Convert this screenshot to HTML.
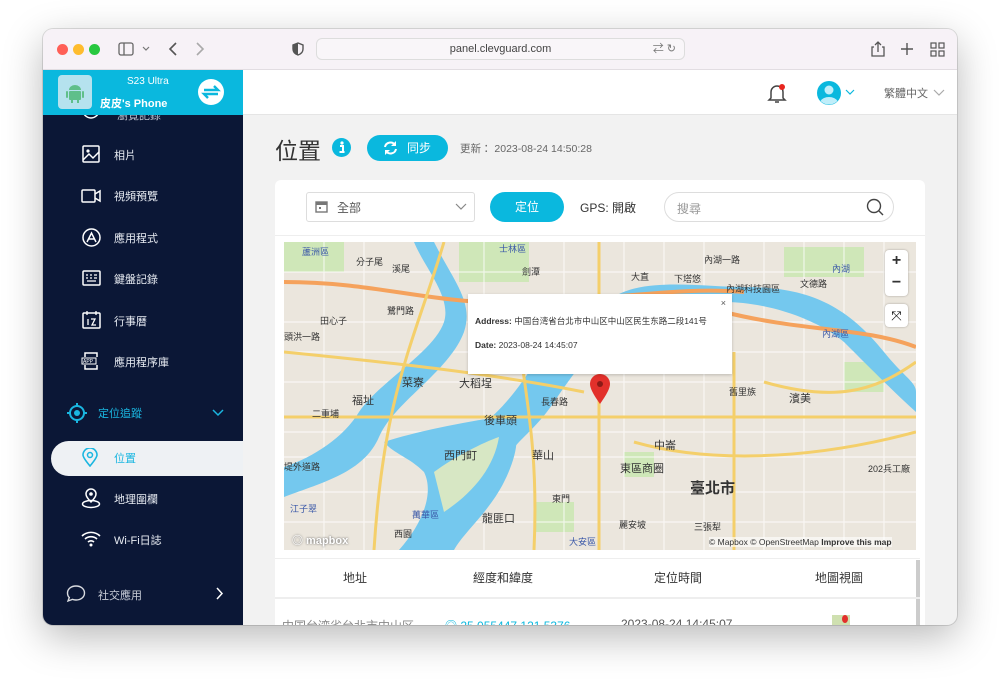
<!DOCTYPE html>
<html><head><meta charset="utf-8"><style>
*{margin:0;padding:0;box-sizing:border-box}
body{width:1000px;height:682px;background:#fff;font-family:"Liberation Sans","Noto Sans CJK TC",sans-serif;position:relative;overflow:hidden}
.win{position:absolute;left:43px;top:29px;width:914px;height:596px;border-radius:10px;overflow:hidden;box-shadow:0 12px 40px rgba(0,0,0,.28),0 0 0 1px rgba(0,0,0,.12);background:#f2f2f2}
.tb{position:absolute;left:0;top:0;width:914px;height:41px;background:#f7f2f7;border-bottom:1px solid #e2dde2}
.dot{position:absolute;top:15px;width:11px;height:11px;border-radius:50%}
.url{position:absolute;left:273px;top:9px;width:369px;height:22px;border:1px solid #ddd;border-radius:6px;background:#f9f6f9;text-align:center;font-size:11px;color:#444;line-height:21px}
.side{position:absolute;left:0;top:41px;width:200px;height:555px;background:#0b1736;color:#fff}
.shead{position:absolute;left:0;top:0;width:200px;height:45px;background:#0ab8de}
.item{position:absolute;left:38px;font-size:11px;color:#e8ecf3}
.main{position:absolute;left:200px;top:41px;width:714px;height:555px}
.topbar{position:absolute;left:0;top:0;width:714px;height:45px;background:#fff;border-bottom:1px solid #e5e5e5}
.card{position:absolute;left:32px;top:110px;width:650px;height:460px;background:#fff;border-radius:6px}
.map{position:absolute;left:9px;top:62px;width:632px;height:308px;background:#ebe6dd;overflow:hidden}
.lb{position:absolute;font-size:9px;color:#333;white-space:nowrap}
</style></head><body>
<div class="win">
 <div class="tb">
  <div class="dot" style="left:14px;background:#ff5f57"></div>
  <div class="dot" style="left:30px;background:#febc2e"></div>
  <div class="dot" style="left:46px;background:#28c840"></div>
  <svg style="position:absolute;left:75px;top:13px" width="32" height="14"><rect x="1" y="1" width="14" height="12" rx="2" fill="none" stroke="#666" stroke-width="1.3"/><line x1="6" y1="1" x2="6" y2="13" stroke="#666" stroke-width="1.3"/><path d="M25 5l3 3 3-3" fill="none" stroke="#777" stroke-width="1.2"/></svg>
  <svg style="position:absolute;left:124px;top:12px" width="40" height="16"><path d="M9 2l-6 6 6 6" fill="none" stroke="#555" stroke-width="1.6"/><path d="M30 2l6 6-6 6" fill="none" stroke="#aaa" stroke-width="1.6"/></svg>
  <svg style="position:absolute;left:249px;top:13px" width="12" height="14"><path d="M6 1L1 3v4c0 3 2 5 5 6 3-1 5-3 5-6V3z" fill="none" stroke="#555" stroke-width="1.4"/><path d="M6 1v12c-3-1-5-3-5-6V3z" fill="#555"/></svg>
  <div class="url">panel.clevguard.com<span style="position:absolute;right:8px;color:#777;font-size:11px">⇄ ↻</span></div>
  <svg style="position:absolute;left:828px;top:11px" width="80" height="18"><path d="M3 7h-2v9h12V7h-2M7 2v10M4 5l3-3 3 3" fill="none" stroke="#555" stroke-width="1.3"/><path d="M36 3v12M30 9h12" stroke="#555" stroke-width="1.4"/><g fill="none" stroke="#555" stroke-width="1.2"><rect x="60" y="3" width="5" height="5"/><rect x="68" y="3" width="5" height="5"/><rect x="60" y="11" width="5" height="5"/><rect x="68" y="11" width="5" height="5"/></g></svg>
 </div>
 <div class="side">
  <div style="position:absolute;left:0;top:45px;width:200px;height:20px;overflow:hidden">
   <div class="item" style="left:74px;top:-8px;opacity:.8">瀏覽記錄</div>
   <svg style="position:absolute;left:38px;top:-10px" width="20" height="20"><circle cx="10" cy="5" r="8" fill="none" stroke="#fff" stroke-width="1.5"/></svg>
  </div>
  <div class="shead">
   <div style="position:absolute;left:15px;top:5px;width:34px;height:34px;background:#b5e2ee;border-radius:4px"><svg width="34" height="34"><g fill="#5fbf8a"><path d="M11 15a6 5 0 0 1 12 0z"/><rect x="11" y="16" width="12" height="9" rx="1"/><rect x="8" y="16" width="2" height="7" rx="1"/><rect x="24" y="16" width="2" height="7" rx="1"/><rect x="13" y="24" width="2" height="4"/><rect x="19" y="24" width="2" height="4"/></g></svg></div>
   <div style="position:absolute;left:84px;top:6px;font-size:10px">S23 Ultra</div>
   <div style="position:absolute;left:57px;top:25px;font-size:11px;font-weight:bold">皮皮's Phone</div>
   <svg style="position:absolute;left:155px;top:9px" width="26" height="26"><circle cx="13" cy="13" r="13" fill="#fff"/><path d="M6 11h14l-4-4M20 15H6l4 4" fill="none" stroke="#0ab8de" stroke-width="2.4"/></svg>
  </div>
  <svg style="position:absolute;left:39px;top:75px" width="18" height="18"><rect x="1" y="1" width="16" height="16" rx="1" fill="none" stroke="#fff" stroke-width="1.5"/><circle cx="6" cy="6" r="1.6" fill="#fff"/><path d="M1 15l6-6 4 4 6-6" fill="none" stroke="#fff" stroke-width="1.5"/></svg>
  <div class="item" style="left:71px;top:77px">相片</div>
  <svg style="position:absolute;left:38px;top:118px" width="20" height="16"><rect x="1" y="2" width="13" height="12" rx="1" fill="none" stroke="#fff" stroke-width="1.5"/><path d="M14 6l5-3v10l-5-3" fill="none" stroke="#fff" stroke-width="1.5"/></svg>
  <div class="item" style="left:71px;top:118px">視頻預覽</div>
  <svg style="position:absolute;left:39px;top:158px" width="19" height="19"><circle cx="9.5" cy="9.5" r="8.5" fill="none" stroke="#fff" stroke-width="1.5"/><path d="M5 14l4.5-9 4.5 9M6.5 11h6" fill="none" stroke="#fff" stroke-width="1.5"/></svg>
  <div class="item" style="left:71px;top:160px">應用程式</div>
  <svg style="position:absolute;left:39px;top:200px" width="19" height="16"><rect x="1" y="1" width="17" height="14" rx="1" fill="none" stroke="#fff" stroke-width="1.5"/><path d="M4 5h2M8 5h2M12 5h3M4 8h2M8 8h2M12 8h3M5 11h9" stroke="#fff" stroke-width="1.3"/></svg>
  <div class="item" style="left:71px;top:201px">鍵盤記錄</div>
  <svg style="position:absolute;left:39px;top:240px" width="19" height="19"><rect x="1" y="3" width="17" height="15" rx="1" fill="none" stroke="#fff" stroke-width="1.5"/><path d="M5 1v4M14 1v4M6 9v6M9 9h4l-3 6h4" fill="none" stroke="#fff" stroke-width="1.3"/></svg>
  <div class="item" style="left:71px;top:243px">行事曆</div>
  <svg style="position:absolute;left:38px;top:281px" width="20" height="20"><path d="M4 6V2h12v4M4 14v4h12v-4" fill="none" stroke="#fff" stroke-width="1.5"/><rect x="1" y="7" width="14" height="6" fill="#0b1736" stroke="#fff"/><text x="2" y="12" font-size="5" fill="#fff" font-family="Liberation Sans">APP</text></svg>
  <div class="item" style="left:71px;top:284px">應用程序庫</div>
  <svg style="position:absolute;left:24px;top:333px" width="20" height="20"><circle cx="10" cy="10" r="7" fill="none" stroke="#1ab6e0" stroke-width="2"/><circle cx="10" cy="10" r="3" fill="#1ab6e0"/><path d="M10 0v3M10 17v3M0 10h3M17 10h3" stroke="#1ab6e0" stroke-width="2"/></svg>
  <div class="item" style="left:55px;top:335px;color:#1ab6e0">定位追蹤</div>
  <svg style="position:absolute;left:169px;top:339px" width="12" height="8"><path d="M1 1l5 5 5-5" fill="none" stroke="#1ab6e0" stroke-width="1.5"/></svg>
  <div style="position:absolute;left:8px;top:371px;width:192px;height:35px;background:#eef1f4;border-radius:18px 0 0 18px"></div>
  <svg style="position:absolute;left:39px;top:378px" width="16" height="19"><path d="M8 18C3 12 1 9 1 7a7 7 0 0 1 14 0c0 2-2 5-7 11z" fill="none" stroke="#1ab6e0" stroke-width="1.6"/><circle cx="8" cy="7" r="2.5" fill="none" stroke="#1ab6e0" stroke-width="1.5"/></svg>
  <div class="item" style="left:71px;top:380px;color:#1ab6e0">位置</div>
  <svg style="position:absolute;left:38px;top:418px" width="20" height="21"><path d="M10 14C6 10 5 8 5 6a5 5 0 0 1 10 0c0 2-1 4-5 8z" fill="none" stroke="#fff" stroke-width="1.5"/><circle cx="10" cy="6" r="1.8" fill="#fff"/><ellipse cx="10" cy="16" rx="8.5" ry="3.5" fill="none" stroke="#fff" stroke-width="1.5"/></svg>
  <div class="item" style="left:71px;top:421px">地理圍欄</div>
  <svg style="position:absolute;left:38px;top:460px" width="20" height="17"><path d="M1 6a13 13 0 0 1 18 0M4 9a9 9 0 0 1 12 0M7 12a4.5 4.5 0 0 1 6 0" fill="none" stroke="#fff" stroke-width="1.6"/><circle cx="10" cy="15" r="1.5" fill="#fff"/></svg>
  <div class="item" style="left:71px;top:462px">Wi-Fi日誌</div>
  <svg style="position:absolute;left:23px;top:514px" width="20" height="19"><path d="M10 2c5 0 8.5 3 8.5 7s-3.5 7-8.5 7c-1.3 0-2.5-.2-3.5-.6L2 17l1.3-3.5C2 12.3 1.5 10.7 1.5 9c0-4 3.5-7 8.5-7z" fill="none" stroke="#fff" stroke-width="1.4" opacity=".85"/></svg>
  <div class="item" style="left:55px;top:517px;opacity:.85">社交應用</div>
  <svg style="position:absolute;left:173px;top:517px" width="8" height="13"><path d="M1 1l5 5.5-5 5.5" fill="none" stroke="#fff" stroke-width="1.5"/></svg>
 </div>
 <div class="main">
  <div class="topbar">
   <svg style="position:absolute;left:524px;top:13px" width="20" height="21"><path d="M4 15V9a6 6 0 0 1 12 0v6l2 2H2z" fill="none" stroke="#444" stroke-width="1.5"/><path d="M8 19h4" stroke="#444" stroke-width="1.5"/><circle cx="15" cy="4" r="3" fill="#e8251f"/></svg>
   <svg style="position:absolute;left:574px;top:11px" width="40" height="24"><circle cx="12" cy="12" r="12" fill="#0ab8de"/><circle cx="12" cy="9" r="4.5" fill="#bfeefa"/><path d="M3.5 20a9 6 0 0 1 17 0 12 12 0 0 1-17 0z" fill="#bfeefa"/><path d="M29 9l4 4 4-4" fill="none" stroke="#0ab8de" stroke-width="1.2"/></svg>
   <div style="position:absolute;left:641px;top:15px;font-size:11px;color:#666">繁體中文</div>
   <svg style="position:absolute;left:690px;top:19px" width="12" height="8"><path d="M1 1l5 5 5-5" fill="none" stroke="#aaa" stroke-width="1.2"/></svg>
  </div>
  <div style="position:absolute;left:32px;top:62px;font-size:23px;color:#333">位置</div>
  <svg style="position:absolute;left:89px;top:68px" width="19" height="19"><circle cx="9.5" cy="9.5" r="9.5" fill="#0ab8de"/><circle cx="10" cy="5" r="1.6" fill="#fff"/><path d="M8 8h3v6h1.5M7.5 14h5" stroke="#fff" stroke-width="2" fill="none"/></svg>
  <div style="position:absolute;left:124px;top:65px;width:81px;height:26px;border-radius:13px;background:#0ab8de;color:#fff;font-size:12px;line-height:26px;padding-left:40px">同步</div>
  <svg style="position:absolute;left:139px;top:70px" width="17" height="16"><path d="M3 7a5.5 5.5 0 0 1 10-2M14 9a5.5 5.5 0 0 1-10 2" fill="none" stroke="#fff" stroke-width="2"/><path d="M14 1v5h-5M3 15v-5h5" fill="#fff"/></svg>
  <div style="position:absolute;left:217px;top:71px;font-size:10.5px;color:#666">更新： 2023-08-24 14:50:28</div>
  <div class="card">
   <div style="position:absolute;left:31px;top:12px;width:169px;height:30px;border:1px solid #ddd;border-radius:3px"></div>
   <svg style="position:absolute;left:40px;top:20px" width="13" height="13"><rect x="1" y="2" width="11" height="10" fill="none" stroke="#777" stroke-width="1.4"/><rect x="1" y="2" width="11" height="3" fill="#777"/><rect x="4" y="7" width="2" height="2" fill="#777"/></svg>
   <div style="position:absolute;left:62px;top:19px;font-size:12px;color:#555">全部</div>
   <svg style="position:absolute;left:180px;top:23px" width="12" height="8"><path d="M1 1l5 5 5-5" fill="none" stroke="#888" stroke-width="1.2"/></svg>
   <div style="position:absolute;left:215px;top:12px;width:74px;height:30px;border-radius:15px;background:#0ab8de;color:#fff;font-size:12px;text-align:center;line-height:30px">定位</div>
   <div style="position:absolute;left:305px;top:19px;font-size:12px;color:#333">GPS: 開啟</div>
   <div style="position:absolute;left:389px;top:12px;width:230px;height:30px;border:1px solid #ddd;border-radius:15px"></div>
   <div style="position:absolute;left:402px;top:20px;font-size:12px;color:#999">搜尋</div>
   <svg style="position:absolute;left:591px;top:18px" width="18" height="18"><circle cx="8" cy="8" r="6.5" fill="none" stroke="#444" stroke-width="1.4"/><path d="M13 13l4 4" stroke="#444" stroke-width="1.4"/></svg>
   <div style="position:absolute;left:0;top:55px;width:650px;height:1px;background:#eee"></div>
   <div class="map">
    <svg width="632" height="308" style="position:absolute;left:0;top:0">
     <g fill="#cfe7b8"><rect x="0" y="0" width="60" height="30"/><rect x="175" y="0" width="70" height="40"/><rect x="500" y="5" width="80" height="30"/><rect x="340" y="210" width="30" height="25"/><rect x="250" y="260" width="40" height="30"/><rect x="560" y="120" width="40" height="30"/></g>
     <g stroke="#fff" stroke-width="1.2" opacity=".7"><path d="M0 80H632M0 140H632M0 215H632M0 250H632M0 280H632M40 0V308M280 0V308M380 0V308M420 0V308M520 0V308M560 0V308M600 0V308M340 0V308M0 30H632M0 110H632M0 190H632M80 0V308M200 0V308M480 0V308"/></g>
     <path d="M150 0C170 40 190 60 180 90 165 130 110 160 95 195 80 230 40 240 0 255V225C30 215 60 195 75 170 95 140 150 110 160 80 168 55 140 25 130 0z" fill="#74c8ee"/>
     <path d="M195 185C230 160 250 120 265 100 275 90 300 80 330 55 360 35 420 45 460 45 520 45 560 60 600 110 620 135 632 140 632 150V170C610 150 590 130 560 100 530 75 480 60 440 60 400 58 360 55 335 80 310 105 290 130 270 160 250 190 230 200 225 215z" fill="#74c8ee"/>
     <path d="M100 200C130 190 180 180 215 175 240 180 235 210 220 240 205 270 180 290 170 308H115C140 280 150 250 140 230 125 215 110 212 100 200z" fill="#74c8ee"/>
     <path d="M150 230C170 215 200 200 215 195 210 225 190 250 160 270z" fill="#d7e7c4"/>
     <g fill="none" stroke="#f5a25c" stroke-width="4"><path d="M0 40C100 40 150 65 250 60S400 45 460 50"/><path d="M440 70C520 90 580 85 632 105"/></g>
     <g fill="none" stroke="#f4cf6a" stroke-width="3"><path d="M315 0V308M0 175H632M160 0C130 100 100 150 90 308M230 60C240 150 255 200 250 308M450 110V308M350 200C420 220 520 220 632 190M0 110C100 120 200 130 300 150M480 140C550 160 590 150 632 120"/></g>
     <path d="M316 170C309 160 306 154 306 150a10 10 0 0 1 20 0c0 4-3 10-10 20z" transform="translate(0,-8)" fill="#e2302b"/>
     <circle cx="316" cy="142" r="3" fill="#8b1a16"/>
    </svg>
    <div class="lb" style="left:18px;top:3px;color:#3a58a8">蘆洲區</div><div class="lb" style="left:72px;top:13px">分子尾</div><div class="lb" style="left:108px;top:20px">溪尾</div><div class="lb" style="left:215px;top:0;color:#3a58a8">士林區</div><div class="lb" style="left:238px;top:23px">劍潭</div><div class="lb" style="left:347px;top:28px">大直</div><div class="lb" style="left:390px;top:30px">下塔悠</div><div class="lb" style="left:420px;top:11px">內湖一路</div><div class="lb" style="left:442px;top:40px">內湖科技園區</div><div class="lb" style="left:516px;top:35px">文德路</div><div class="lb" style="left:548px;top:20px;color:#3a58a8">內湖</div><div class="lb" style="left:36px;top:72px">田心子</div><div class="lb" style="left:0;top:88px;">頭洪一路</div><div class="lb" style="left:103px;top:62px">鷺門路</div><div class="lb" style="left:118px;top:132px;font-size:11px">菜寮</div><div class="lb" style="left:175px;top:133px;font-size:11px">大稻埕</div><div class="lb" style="left:68px;top:150px;font-size:11px">福址</div><div class="lb" style="left:28px;top:165px">二重埔</div><div class="lb" style="left:200px;top:170px;font-size:11px">後車頭</div><div class="lb" style="left:257px;top:153px">長春路</div><div class="lb" style="left:370px;top:195px;font-size:11px">中崙</div><div class="lb" style="left:445px;top:143px">舊里族</div><div class="lb" style="left:505px;top:148px;font-size:11px">濱美</div><div class="lb" style="left:538px;top:85px;color:#3a58a8">內湖區</div><div class="lb" style="left:160px;top:205px;font-size:11px">西門町</div><div class="lb" style="left:248px;top:205px;font-size:11px">華山</div><div class="lb" style="left:336px;top:218px;font-size:11px">東區商圈</div><div class="lb" style="left:406px;top:235px;font-size:15px;font-weight:bold">臺北市</div><div class="lb" style="left:0;top:218px">堤外道路</div><div class="lb" style="left:6px;top:260px;color:#3a58a8">江子翠</div><div class="lb" style="left:128px;top:266px;color:#3a58a8">萬華區</div><div class="lb" style="left:198px;top:268px;font-size:11px">龍匪口</div><div class="lb" style="left:110px;top:285px">西園</div><div class="lb" style="left:268px;top:250px">東門</div><div class="lb" style="left:335px;top:276px">麗安坡</div><div class="lb" style="left:410px;top:278px">三張犁</div><div class="lb" style="left:285px;top:293px;color:#3a58a8">大安區</div><div class="lb" style="left:584px;top:220px">202兵工廠</div>
    <div style="position:absolute;left:184px;top:52px;width:264px;height:80px;background:#fff;box-shadow:0 1px 3px rgba(0,0,0,.2);font-size:8.5px;color:#333">
     <div style="position:absolute;right:6px;top:4px;font-size:9px;color:#555">×</div>
     <div style="position:absolute;left:7px;top:21px"><b>Address:</b> 中国台湾省台北市中山区中山区民生东路二段141号</div>
     <div style="position:absolute;left:7px;top:46px"><b>Date:</b> 2023-08-24 14:45:07</div>
    </div>
    <div style="position:absolute;left:601px;top:8px;width:23px;height:46px;background:#fff;border-radius:4px;box-shadow:0 0 2px rgba(0,0,0,.3);font-size:16px;text-align:center;line-height:22px;font-weight:bold;color:#333">+<br>−</div>
    <div style="position:absolute;left:601px;top:62px;width:23px;height:23px;background:#fff;border-radius:4px;box-shadow:0 0 2px rgba(0,0,0,.3);font-size:13px;text-align:center;line-height:23px">⤧</div>
    <div class="lb" style="left:8px;top:290px;color:#fff;font-size:11px;font-weight:bold;text-shadow:0 0 2px #555">◎ mapbox</div>
    <div class="lb" style="left:425px;top:295px;font-size:8.5px;background:rgba(255,255,255,.6)">© Mapbox © OpenStreetMap <b>Improve this map</b></div>
   </div>
   <div style="position:absolute;left:0;top:378px;width:645px;height:1px;background:#eee"></div>
   <div style="position:absolute;left:641px;top:380px;width:4px;height:80px;background:#ccc"></div>
   <div style="position:absolute;left:0;top:389px;width:640px;font-size:12px;color:#333">
    <span style="position:absolute;left:68px">地址</span><span style="position:absolute;left:198px">經度和緯度</span><span style="position:absolute;left:379px">定位時間</span><span style="position:absolute;left:540px">地圖視圖</span>
   </div>
   <div style="position:absolute;left:0;top:417px;width:645px;height:2px;background:#eee"></div>
   <div style="position:absolute;left:7px;top:437px;font-size:12px;color:#888">中国台湾省台北市中山区</div>
   <div style="position:absolute;left:170px;top:437px;font-size:12px;color:#0ab8de">◎ 25.055447,121.5376</div>
   <div style="position:absolute;left:346px;top:437px;font-size:12px;color:#555">2023-08-24 14:45:07</div>
   <div style="position:absolute;left:557px;top:435px;width:18px;height:14px;background:#cfe0b0"><div style="position:absolute;left:10px;top:0;width:6px;height:8px;border-radius:50%;background:#e2302b"></div></div>
  </div>
 </div>
</div>
</body></html>
